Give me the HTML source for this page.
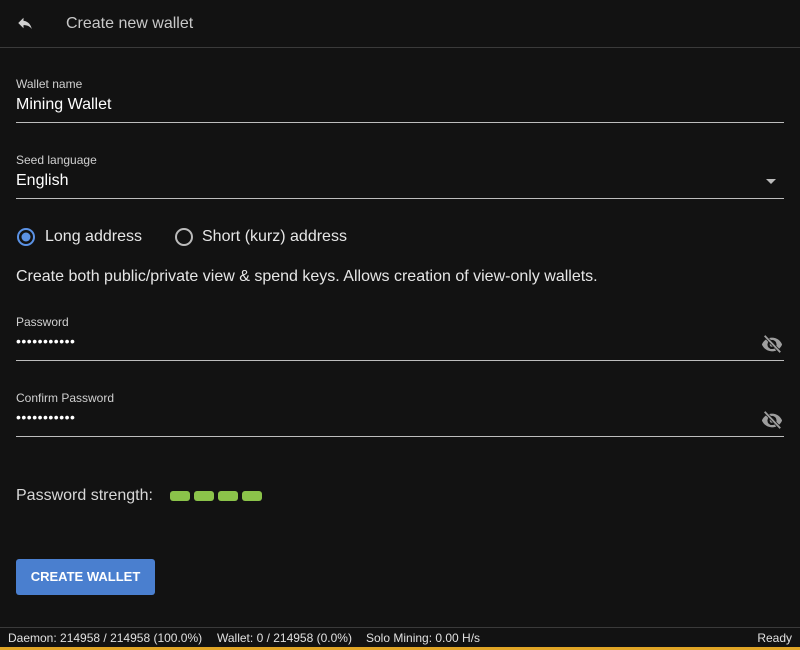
<!DOCTYPE html>
<html><head><style>
*{margin:0;padding:0;box-sizing:border-box}
body{width:800px;height:650px;background:#121212;font-family:"Liberation Sans",sans-serif;color:#fff;position:relative;overflow:hidden}
.top{position:absolute;left:0;top:0;width:800px;height:48px;border-bottom:1px solid #3a3a3a}
.title{position:absolute;left:66px;top:15px;font-size:16px;color:#c8c8c8}
.lbl{position:absolute;left:16px;font-size:12px;color:#d0d0d0}
.val{position:absolute;left:16px;font-size:16px;color:#fff}
.line{position:absolute;left:16px;width:768px;height:1px;background:#bdbdbd}
.t{position:absolute;font-size:16px;color:#e6e6e6}
.eye{position:absolute;left:760px}
.bar{position:absolute;top:491px;width:20px;height:10px;border-radius:3px;background:#8bc34a}
.btn{position:absolute;left:16px;top:559px;width:139px;height:36px;background:#4a7fcf;border-radius:3px;color:#fff;font-size:13px;font-weight:bold;text-align:center;line-height:36px}
.status{position:absolute;left:0;top:627px;width:800px;height:20px;border-top:1px solid #3a3a3a;font-size:12px;color:#e0e0e0;line-height:20px}
.status span{position:absolute;top:0}
</style></head><body>
<div class="top">
<svg style="position:absolute;left:15px;top:14px" width="20" height="18" viewBox="0 0 24 24"><path fill="#d0d0d0" d="M10 9V5l-7 7 7 7v-4.1c5 0 8.5 1.6 11 5.1-1-5-4-10-11-11z"/></svg>
<div class="title">Create new wallet</div>
</div>
<div class="lbl" style="top:77px">Wallet name</div>
<div class="val" style="top:96px">Mining Wallet</div>
<div class="line" style="top:122px"></div>
<div class="lbl" style="top:153px">Seed language</div>
<div class="val" style="top:172px">English</div>
<div style="position:absolute;left:766px;top:179px;border-left:5px solid transparent;border-right:5px solid transparent;border-top:5px solid #bbb"></div>
<div class="line" style="top:198px"></div>
<svg style="position:absolute;left:16px;top:227px" width="20" height="20"><circle cx="10" cy="10" r="8" fill="none" stroke="#5b92e5" stroke-width="2"/><circle cx="10" cy="10" r="4.5" fill="#5b92e5"/></svg>
<div class="t" style="left:45px;top:228px">Long address</div>
<svg style="position:absolute;left:174px;top:227px" width="20" height="20"><circle cx="10" cy="10" r="8" fill="none" stroke="#bbb" stroke-width="2"/></svg>
<div class="t" style="left:202px;top:228px">Short (kurz) address</div>
<div class="t" style="left:16px;top:268px">Create both public/private view &amp; spend keys. Allows creation of view-only wallets.</div>
<div class="lbl" style="top:315px">Password</div>
<div class="val" style="top:333px;font-size:14px;letter-spacing:0.5px">•••••••••••</div>
<svg class="eye" style="top:333px" width="24" height="22" viewBox="0 0 24 24"><path fill="#9e9e9e" d="M12 5C7 5 2.7 8.1 1 12.5 2.7 16.9 7 20 12 20s9.3-3.1 11-7.5C21.3 8.1 17 5 12 5zm0 12.5a5 5 0 110-10 5 5 0 010 10z"/><circle cx="12" cy="12.5" r="2.5" fill="#9e9e9e"/><path d="M4 3l17 18" stroke="#121212" stroke-width="3.5"/><path d="M4 3l17 18" stroke="#9e9e9e" stroke-width="2"/></svg>
<div class="line" style="top:360px"></div>
<div class="lbl" style="top:391px">Confirm Password</div>
<div class="val" style="top:409px;font-size:14px;letter-spacing:0.5px">•••••••••••</div>
<svg class="eye" style="top:409px" width="24" height="22" viewBox="0 0 24 24"><path fill="#9e9e9e" d="M12 5C7 5 2.7 8.1 1 12.5 2.7 16.9 7 20 12 20s9.3-3.1 11-7.5C21.3 8.1 17 5 12 5zm0 12.5a5 5 0 110-10 5 5 0 010 10z"/><circle cx="12" cy="12.5" r="2.5" fill="#9e9e9e"/><path d="M4 3l17 18" stroke="#121212" stroke-width="3.5"/><path d="M4 3l17 18" stroke="#9e9e9e" stroke-width="2"/></svg>
<div class="line" style="top:436px"></div>
<div class="t" style="left:16px;top:487px;color:#d8d8d8">Password strength:</div>
<div class="bar" style="left:170px"></div><div class="bar" style="left:194px"></div><div class="bar" style="left:218px"></div><div class="bar" style="left:242px"></div>
<div class="btn">CREATE WALLET</div>
<div class="status"><span style="left:8px">Daemon: 214958 / 214958 (100.0%)</span><span style="left:217px">Wallet: 0 / 214958 (0.0%)</span><span style="left:366px">Solo Mining: 0.00 H/s</span><span style="right:8px">Ready</span></div>
<div style="position:absolute;left:0;top:647px;width:800px;height:3px;background:#e0a526"></div>
</body></html>
